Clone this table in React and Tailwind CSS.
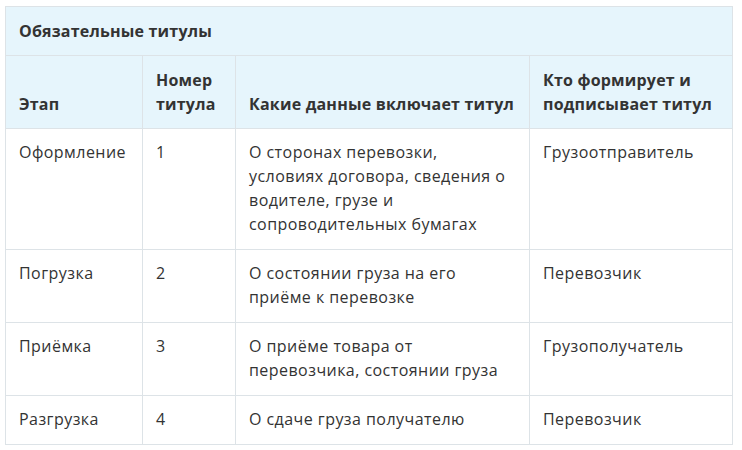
const rows = [
  {
    stage: 'Оформление',
    num: '1',
    data: ['О сторонах перевозки,', 'условиях договора, сведения о', 'водителе, грузе и', 'сопроводительных бумагах'],
    who: 'Грузоотправитель',
  },
  {
    stage: 'Погрузка',
    num: '2',
    data: ['О состоянии груза на его', 'приёме к перевозке'],
    who: 'Перевозчик',
  },
  {
    stage: 'Приёмка',
    num: '3',
    data: ['О приёме товара от', 'перевозчика, состоянии груза'],
    who: 'Грузополучатель',
  },
  {
    stage: 'Разгрузка',
    num: '4',
    data: ['О сдаче груза получателю'],
    who: 'Перевозчик',
  },
];

const th = 'border border-[#dde3e7] px-[13px] pt-[12px] pb-[12px] text-left align-bottom font-bold tracking-[0.2px]';
const td = 'border border-[#dde3e7] px-[13px] pt-[11px] pb-[13px] align-top tracking-[0.45px]';

export default function App() {
  return (
    <div className="w-[742px] h-[450px] bg-white pt-[6px] pl-[5px] text-[16px] leading-[24px] text-[#333]" style={{ fontFamily: '"Open Sans", "Liberation Sans", sans-serif' }}>
      <table className="border-collapse table-fixed w-[727px]">
        <colgroup>
          <col className="w-[137px]" />
          <col className="w-[93px]" />
          <col className="w-[294px]" />
          <col className="w-[203px]" />
        </colgroup>
        <thead className="bg-[#e6f5fc]">
          <tr>
            <th colSpan={4} className="border border-[#dde3e7] px-[13px] h-[49px] text-left font-bold align-middle tracking-[0.2px]">
              Обязательные титулы
            </th>
          </tr>
          <tr>
            <th className={th}>Этап</th>
            <th className={th}>
              Номер
              <br />
              титула
            </th>
            <th className={th + ' whitespace-nowrap'}>Какие данные включает титул</th>
            <th className={th + ' whitespace-nowrap'}>
              Кто формирует и
              <br />
              подписывает титул
            </th>
          </tr>
        </thead>
        <tbody>
          {rows.map((r) => (
            <tr key={r.stage}>
              <td className={td}>{r.stage}</td>
              <td className={td}>{r.num}</td>
              <td className={td}>
                {r.data.map((line) => (
                  <div key={line} className="whitespace-nowrap">{line}</div>
                ))}
              </td>
              <td className={td}>{r.who}</td>
            </tr>
          ))}
        </tbody>
      </table>
    </div>
  );
}
